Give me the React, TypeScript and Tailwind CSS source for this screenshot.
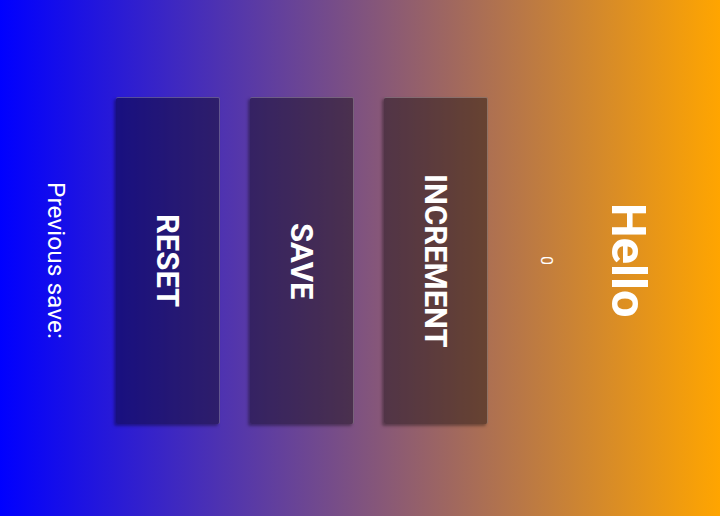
import React from "react";

const font = { fontFamily: "Roboto, 'Noto Sans', sans-serif" };

function Btn({ label }: { label: string }) {
  return (
    <button className="flex h-[327px] w-[104px] shrink-0 items-center justify-center rounded-[2px] border-t border-r border-white/25 bg-black/40 text-[31px] font-bold leading-none text-white shadow-[-2px_2px_3px_rgba(0,0,0,0.35)]">
      {label}
    </button>
  );
}

export default function App() {
  return (
    <div
      style={font}
      className="h-[516px] w-[720px] overflow-hidden bg-[linear-gradient(to_right,#0000ff,#ffa500)]"
    >
      <div className="flex h-full w-full flex-col items-center pt-[5px] pr-[67px] [writing-mode:vertical-rl]">
        <div className="text-[49px] font-bold leading-[49px] text-white">Hello</div>
        <div className="mr-[50px] text-[16px] leading-[16px] text-white">0</div>
        <div className="mr-[50px] flex flex-col items-center gap-[30px]">
          <Btn label="INCREMENT" />
          <Btn label="SAVE" />
          <Btn label="RESET" />
        </div>
        <div className="mr-[48px] text-[24.5px] leading-[24px] text-white">Previous save:</div>
      </div>
    </div>
  );
}
